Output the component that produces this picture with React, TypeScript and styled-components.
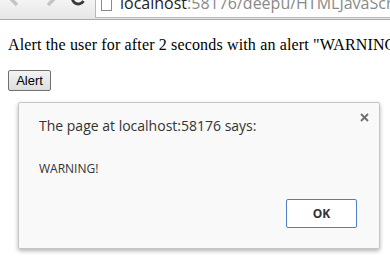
import React from "react";
import styled, { createGlobalStyle } from "styled-components";

const GlobalStyle = createGlobalStyle`
  html, body {
    margin: 0;
    padding: 0;
    background: #ffffff;
  }
  body {
    width: 390px;
    height: 259px;
    overflow: hidden;
    position: relative;
  }
`;

const Toolbar = styled.div`
  height: 19px;
  display: flex;
  align-items: flex-start;
  background: linear-gradient(#f4f4f4, #e6e6e6);
  border-bottom: 1px solid #a9a9a9;
  overflow: hidden;
`;

const NavButton = styled.div<{ $left: number; $dark?: boolean }>`
  margin-left: ${(p) => p.$left}px;
  width: 17px;
  height: 24px;
  margin-top: -14px;
  color: ${(p) => (p.$dark ? "#3a3a3a" : "#c4c4c4")};
  display: flex;
`;

const AddressBar = styled.div`
  margin-left: 8px;
  flex: 1;
  height: 17px;
  background: #ffffff;
  border-left: 1px solid #b8b8b8;
  border-bottom: 1px solid #b8b8b8;
  display: flex;
  align-items: flex-end;
  padding-left: 5px;
  overflow: hidden;
`;

const PageIcon = styled.div`
  width: 9px;
  height: 10px;
  border: 1px solid #8a8a8a;
  border-top: none;
  margin-bottom: 6px;
  margin-right: 8px;
  flex-shrink: 0;
`;

const Url = styled.div`
  font-family: "Open Sans", "Noto Sans", sans-serif;
  font-size: 16px;
  line-height: 16px;
  margin-bottom: 6px;
  color: #8a8a8a;
  white-space: nowrap;
`;

const Host = styled.span`
  color: #222222;
`;

const Page = styled.div`
  padding: 0 8px;
  font-family: "Liberation Serif", "Times New Roman", serif;
  font-size: 16px;
  color: #000000;
`;

const Text = styled.p`
  margin: 15px 0 0;
  line-height: 19px;
  letter-spacing: 0.15px;
  white-space: nowrap;
`;

const AlertButton = styled.button`
  margin-top: 16px;
  width: 43px;
  height: 21px;
  padding: 0;
  font-family: "Liberation Sans", Arial, sans-serif;
  font-size: 13px;
  color: #000000;
  background: linear-gradient(#f3f3f3, #dedede);
  border: 1px solid #707070;
  border-radius: 2px;
`;

const Dialog = styled.div`
  position: absolute;
  left: 18px;
  top: 102px;
  width: 362px;
  height: 147px;
  box-sizing: border-box;
  background: #f9f9f9;
  border: 1px solid #c6c6c6;
  border-radius: 2px;
  box-shadow: 0 2px 4px rgba(0, 0, 0, 0.3);
  display: flex;
  flex-direction: column;
  padding: 13px 20px 20px 20px;
  font-family: "Open Sans", "Noto Sans", sans-serif;
`;

const CloseIcon = styled.div`
  position: absolute;
  right: 10px;
  top: 10px;
  width: 9px;
  height: 9px;
  display: flex;
  color: #6e6e6e;
`;

const Title = styled.div`
  font-size: 14px;
  line-height: 20px;
  color: #333333;
`;

const Message = styled.div`
  margin-top: 25px;
  font-size: 12px;
  line-height: 16px;
  color: #333333;
`;

const Footer = styled.div`
  margin-top: auto;
  display: flex;
  justify-content: flex-end;
  padding-right: 2px;
`;

const OkButton = styled.button`
  width: 71px;
  height: 29px;
  background: #ffffff;
  border: 1px solid #4d7fc4;
  border-radius: 2px;
  font-family: "Open Sans", "Noto Sans", sans-serif;
  font-weight: 700;
  font-size: 12px;
  color: #333333;
`;

const Arrow = ({ flip }: { flip?: boolean }) => (
  <svg width="17" height="24" viewBox="0 0 17 24" style={{ transform: flip ? "scaleX(-1)" : undefined }}>
    <path d="M2 12 L9 5 M2 12 L9 19 M2 12 L16 12" stroke="currentColor" strokeWidth="3.5" fill="none" />
  </svg>
);

const Reload = () => (
  <svg width="17" height="24" viewBox="0 0 17 24">
    <path d="M13.5 15 A6 6 0 1 1 13.5 9" stroke="currentColor" strokeWidth="2.8" fill="none" />
  </svg>
);

export default function App() {
  return (
    <>
      <GlobalStyle />
      <Toolbar>
        <NavButton $left={8}>
          <Arrow />
        </NavButton>
        <NavButton $left={15}>
          <Arrow flip />
        </NavButton>
        <NavButton $left={13} $dark>
          <Reload />
        </NavButton>
        <AddressBar>
          <PageIcon />
          <Url>
            <Host>localhost</Host>:58176/deepu/HTMLJavaScript/AlertDemo.html
          </Url>
        </AddressBar>
      </Toolbar>
      <Page>
        <Text>Alert the user for after 2 seconds with an alert "WARNING!"</Text>
        <AlertButton>Alert</AlertButton>
      </Page>
      <Dialog>
        <CloseIcon>
          <svg width="9" height="9" viewBox="0 0 9 9">
            <path d="M1 1 L8 8 M8 1 L1 8" stroke="currentColor" strokeWidth="1.8" />
          </svg>
        </CloseIcon>
        <Title>The page at localhost:58176 says:</Title>
        <Message>WARNING!</Message>
        <Footer>
          <OkButton>OK</OkButton>
        </Footer>
      </Dialog>
    </>
  );
}
